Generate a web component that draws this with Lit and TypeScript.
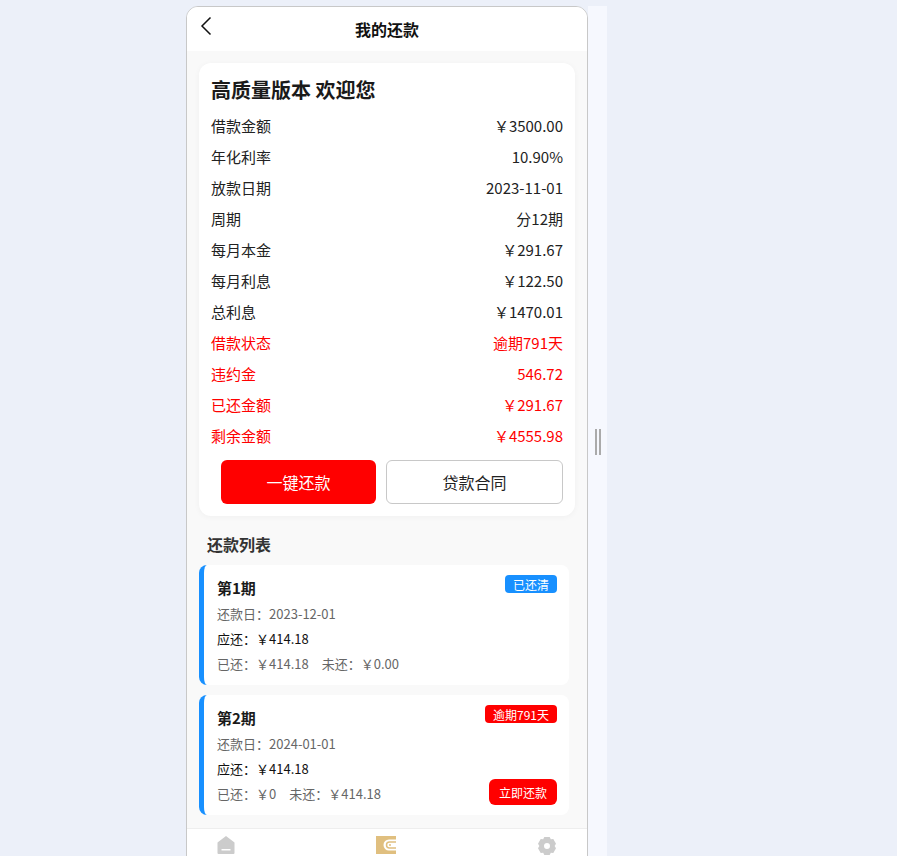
import { LitElement, html, css, svg } from 'lit';
import { customElement } from 'lit/decorators.js';

// ── Data ──────────────────────────────────────────────────────────────────────

interface InfoRow {
  label: string;
  value: string;
  alert?: boolean;
}

interface Installment {
  period: string;
  date: string;
  due: string;
  paid: string;
  unpaid: string;
  badge: string;
  overdue: boolean;
}

const INFO_ROWS: InfoRow[] = [
  { label: '借款金额', value: '￥3500.00' },
  { label: '年化利率', value: '10.90%' },
  { label: '放款日期', value: '2023-11-01' },
  { label: '周期', value: '分12期' },
  { label: '每月本金', value: '￥291.67' },
  { label: '每月利息', value: '￥122.50' },
  { label: '总利息', value: '￥1470.01' },
  { label: '借款状态', value: '逾期791天', alert: true },
  { label: '违约金', value: '546.72', alert: true },
  { label: '已还金额', value: '￥291.67', alert: true },
  { label: '剩余金额', value: '￥4555.98', alert: true },
];

const INSTALLMENTS: Installment[] = [
  { period: '第1期', date: '2023-12-01', due: '￥414.18', paid: '￥414.18', unpaid: '￥0.00', badge: '已还清', overdue: false },
  { period: '第2期', date: '2024-01-01', due: '￥414.18', paid: '￥0', unpaid: '￥414.18', badge: '逾期791天', overdue: true },
];

// ── Icons ─────────────────────────────────────────────────────────────────────

const backIcon = svg`<svg width="12" height="20" viewBox="0 0 12 20"><path d="M10.5 1.5 2 10l8.5 8.5" fill="none" stroke="#111" stroke-width="1.5"/></svg>`;
const homeIcon = svg`<svg width="18" height="18" viewBox="0 0 18 18"><path fill-rule="evenodd" fill="#ccc" d="M9 0 17.5 6.5V17a1 1 0 0 1-1 1H1.5a1 1 0 0 1-1-1V6.5ZM4.5 13v1.5h9V13Z"/></svg>`;
const walletIcon = svg`<svg width="21" height="18" viewBox="0 0 21 18"><path fill="#e0bf7f" d="M0 0h20v3.5h-7a5.5 5.5 0 0 0 0 11h7V18H0Z"/><path fill="none" stroke="#e0bf7f" stroke-width="1.5" d="M20 6h-6.500a3 3 0 0 0 0 6H20"/><circle cx="14" cy="9" r="1" fill="#e0bf7f"/></svg>`;
const gearIcon = svg`<svg width="20" height="20" viewBox="0 0 20 20"><path fill-rule="evenodd" fill="#ccc" d="M7.300 1h5.400l1.100 2.300 2.500-.2 2.700 4.700L17.600 10l1.400 2.200-2.700 4.700-2.500-.2L12.700 19H7.300l-1.100-2.300-2.500.2L1 12.200 2.400 10 1 7.800l2.700-4.700 2.500.2ZM10 7a3 3 0 1 0 0 6 3 3 0 0 0 0-6Z"/></svg>`;

// ── AppRoot ───────────────────────────────────────────────────────────────────

@customElement('app-root')
export class AppRoot extends LitElement {
  static styles = css`
    :host {
      display: block;
      height: 856px;
      overflow: hidden;
      background: #ecf0f9;
      font-family: 'Noto Sans CJK SC', 'Noto Sans', sans-serif;
      color: #1a1a1a;
    }

    .stage {
      display: flex;
      align-items: flex-start;
      padding: 6px 0 0 186px;
    }

    .phone {
      box-sizing: border-box;
      width: 402px;
      height: 872px;
      display: flex;
      flex-direction: column;
      flex: none;
      background: #f9f9f9;
      border: 1px solid #c8c8c8;
      border-radius: 12px;
      overflow: hidden;
    }

    .strip {
      width: 19px;
      height: 872px;
      flex: none;
      display: flex;
      align-items: center;
      justify-content: center;
      background: #f6f8fe;
    }

    .grip {
      width: 2px;
      height: 26px;
      border-left: 2px solid #aaa;
      border-right: 2px solid #aaa;
    }

    .header {
      height: 44px;
      flex: none;
      display: flex;
      align-items: center;
      justify-content: center;
      position: relative;
      background: #fff;
      font-size: 16px;
      font-weight: 700;
      color: #111;
    }

    .back {
      position: absolute;
      left: 13px;
      top: 9px;
      line-height: 0;
    }

    .content {
      flex: 1;
      min-height: 0;
      overflow: hidden;
      padding: 12px 15px 0;
    }

    .card {
      box-sizing: border-box;
      width: 376px;
      margin-left: -3px;
      padding: 12px;
      background: #fff;
      border-radius: 12px;
      box-shadow: 0 1px 6px rgba(0, 0, 0, 0.04);
    }

    .title {
      font-size: 20px;
      font-weight: 700;
      line-height: 30px;
      margin-bottom: 5px;
      color: #1a1a1a;
    }

    .row {
      display: flex;
      justify-content: space-between;
      align-items: center;
      height: 31px;
      font-size: 15px;
      color: #222;
    }

    .row.alert {
      color: #f00;
    }

    .actions {
      display: flex;
      gap: 10px;
      margin: 9px 0 0 10px;
    }

    .btn {
      box-sizing: border-box;
      height: 44px;
      display: flex;
      align-items: center;
      justify-content: center;
      border-radius: 6px;
      font-size: 16px;
    }

    .btn.pay {
      width: 155px;
      background: #f00;
      color: #fff;
    }

    .btn.contract {
      width: 177px;
      background: #fff;
      border: 1px solid #c8c8c8;
      color: #222;
    }

    .section {
      font-size: 16px;
      font-weight: 700;
      line-height: 24px;
      margin: 16px 0 9px 5px;
      color: #333;
    }

    .item {
      box-sizing: border-box;
      width: 370px;
      height: 120px;
      margin: 0 0 10px -3px;
      padding: 10px 12px 0 13px;
      position: relative;
      background: #fff;
      border-left: 5px solid #1890ff;
      border-radius: 8px;
    }

    .period {
      font-size: 15px;
      font-weight: 700;
      line-height: 26px;
      color: #1a1a1a;
    }

    .line {
      font-size: 13px;
      line-height: 25px;
      color: #666;
    }

    .line.due {
      color: #111;
    }

    .line span + span {
      margin-left: 13px;
    }

    .badge {
      position: absolute;
      top: 10px;
      right: 12px;
      height: 18px;
      padding: 0 8px;
      display: flex;
      align-items: center;
      border-radius: 4px;
      font-size: 12px;
      color: #fff;
      background: #1890ff;
    }

    .badge.overdue {
      background: #f00;
    }

    .pay-now {
      position: absolute;
      right: 12px;
      bottom: 10px;
      height: 26px;
      padding: 0 10px;
      display: flex;
      align-items: center;
      border-radius: 6px;
      font-size: 12px;
      color: #fff;
      background: #f00;
    }

    .tabbar {
      height: 49px;
      flex: none;
      display: flex;
      justify-content: space-between;
      padding: 7px 30px 0;
      box-sizing: border-box;
      background: #fff;
      border-top: 1px solid #eee;
    }

    .tab {
      line-height: 0;
    }
  `;

  private renderRow(row: InfoRow) {
    return html`
      <div class="row ${row.alert ? 'alert' : ''}">
        <span>${row.label}</span>
        <span>${row.value}</span>
      </div>
    `;
  }

  private renderItem(item: Installment) {
    return html`
      <div class="item">
        <div class="period">${item.period}</div>
        <div class="line">还款日：${item.date}</div>
        <div class="line due">应还：${item.due}</div>
        <div class="line"><span>已还：${item.paid}</span><span>未还：${item.unpaid}</span></div>
        <div class="badge ${item.overdue ? 'overdue' : ''}">${item.badge}</div>
        ${item.overdue ? html`<div class="pay-now">立即还款</div>` : ''}
      </div>
    `;
  }

  render() {
    return html`
      <div class="stage">
        <div class="phone">
          <div class="header">
            <span class="back">${backIcon}</span>
            我的还款
          </div>
          <div class="content">
            <div class="card">
              <div class="title">高质量版本 欢迎您</div>
              ${INFO_ROWS.map((row) => this.renderRow(row))}
              <div class="actions">
                <div class="btn pay">一键还款</div>
                <div class="btn contract">贷款合同</div>
              </div>
            </div>
            <div class="section">还款列表</div>
            ${INSTALLMENTS.map((item) => this.renderItem(item))}
          </div>
          <div class="tabbar">
            <span class="tab">${homeIcon}</span>
            <span class="tab">${walletIcon}</span>
            <span class="tab">${gearIcon}</span>
          </div>
        </div>
        <div class="strip"><div class="grip"></div></div>
      </div>
    `;
  }
}

declare global {
  interface HTMLElementTagNameMap {
    'app-root': AppRoot;
  }
}
